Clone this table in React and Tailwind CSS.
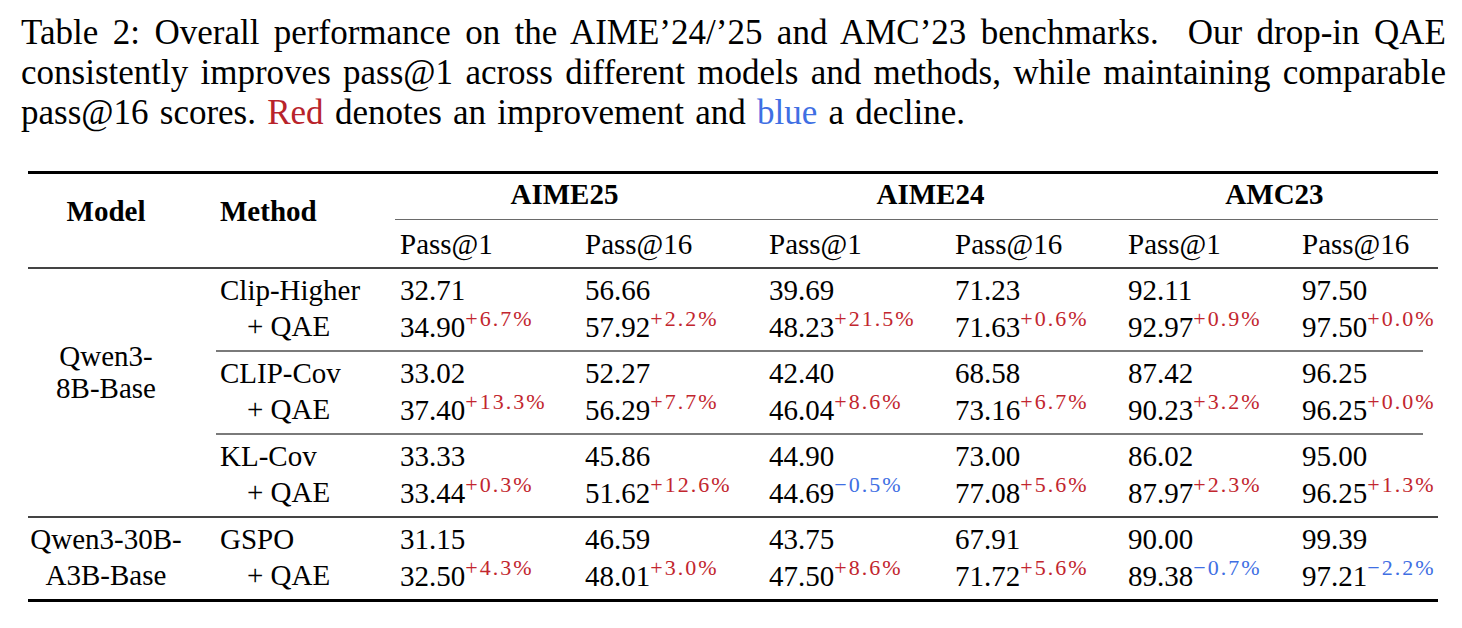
import React from "react";

const serif = { fontFamily: '"Liberation Serif", "Times New Roman", serif' };

const dataCols = ["w-[185px]", "w-[184px]", "w-[186px]", "w-[173px]", "w-[174px]", "w-[141px]"];

const sections = [
  {
    model: ["Qwen3-", "8B-Base"],
    centered: true,
    groups: [
      {
        method: "Clip-Higher",
        base: ["32.71", "56.66", "39.69", "71.23", "92.11", "97.50"],
        qae: [["34.90", "+6.7%"], ["57.92", "+2.2%"], ["48.23", "+21.5%"], ["71.63", "+0.6%"], ["92.97", "+0.9%"], ["97.50", "+0.0%"]],
      },
      {
        method: "CLIP-Cov",
        base: ["33.02", "52.27", "42.40", "68.58", "87.42", "96.25"],
        qae: [["37.40", "+13.3%"], ["56.29", "+7.7%"], ["46.04", "+8.6%"], ["73.16", "+6.7%"], ["90.23", "+3.2%"], ["96.25", "+0.0%"]],
      },
      {
        method: "KL-Cov",
        base: ["33.33", "45.86", "44.90", "73.00", "86.02", "95.00"],
        qae: [["33.44", "+0.3%"], ["51.62", "+12.6%"], ["44.69", "\u22120.5%"], ["77.08", "+5.6%"], ["87.97", "+2.3%"], ["96.25", "+1.3%"]],
      },
    ],
  },
  {
    model: ["Qwen3-30B-", "A3B-Base"],
    centered: false,
    groups: [
      {
        method: "GSPO",
        base: ["31.15", "46.59", "43.75", "67.91", "90.00", "99.39"],
        qae: [["32.50", "+4.3%"], ["48.01", "+3.0%"], ["47.50", "+8.6%"], ["71.72", "+5.6%"], ["89.38", "\u22120.7%"], ["97.21", "\u22122.2%"]],
      },
    ],
  },
];

function Delta({ v }) {
  const neg = v.startsWith("\u2212");
  return (
    <span
      className={`text-[22px] leading-none tracking-[2px] align-[11px] ${neg ? "text-[#3f6fe3]" : "text-[#c2262e]"}`}
    >
      {v}
    </span>
  );
}

function Group({ g }) {
  return (
    <div className="flex h-[81px] pt-[3px]">
      <div className="w-[187px] pl-[12px]">
        <div className="h-[36px] leading-[36px]">{g.method}</div>
        <div className="h-[36px] leading-[36px] pl-[27px]">+ QAE</div>
      </div>
      {g.base.map((b, i) => (
        <div key={i} className={`${dataCols[i]} pl-[5px]`}>
          <div className="h-[36px] leading-[36px]">{b}</div>
          <div className="h-[36px] leading-[36px] whitespace-nowrap">
            {g.qae[i][0]}
            <Delta v={g.qae[i][1]} />
          </div>
        </div>
      ))}
    </div>
  );
}

export default function App() {
  return (
    <div className="w-[1462px] h-[628px] bg-white text-black overflow-hidden" style={serif}>
      <div className="pl-[21px] pr-[16px] pt-[13px] text-[35px] leading-[40px]">
        <div className="text-justify [text-align-last:justify]">
          Table 2: Overall performance on the AIME’24/’25 and AMC’23 benchmarks.&nbsp; Our drop-in QAE
        </div>
        <div className="text-justify [text-align-last:justify]">
          consistently improves pass@1 across different models and methods, while maintaining comparable
        </div>
        <div className="whitespace-nowrap [word-spacing:2.5px]">
          pass@16 scores. <span className="text-[#b8232b]">Red</span> denotes an improvement and{" "}
          <span className="text-[#3f6fe3]">blue</span> a decline.
        </div>
      </div>

      <div className="ml-[28px] mt-[38px] w-[1410px] text-[29px]">
        <div className="h-[3px] bg-black" />
        {/* header */}
        <div className="flex h-[93px]">
          <div className="w-[180px] pr-[24px] pt-[19px] text-center font-bold leading-[36px]">Model</div>
          <div className="w-[187px] pl-[12px] pt-[19px] font-bold leading-[36px]">Method</div>
          <div className="flex-1 flex flex-col">
            <div className="flex h-[45px] font-bold">
              <div className="w-[369px] pr-[30px] pt-[2px] text-center leading-[36px]">AIME25</div>
              <div className="w-[359px] pr-[26px] pt-[2px] text-center leading-[36px]">AIME24</div>
              <div className="w-[315px] pr-[12px] pt-[2px] text-center leading-[36px]">AMC23</div>
            </div>
            <div className="h-[1px] bg-[#6a6a6a]" />
            <div className="flex h-[47px] pt-[6px]">
              {["Pass@1", "Pass@16", "Pass@1", "Pass@16", "Pass@1", "Pass@16"].map((p, i) => (
                <div key={i} className={`${dataCols[i]} pl-[5px] leading-[36px]`}>
                  {p}
                </div>
              ))}
            </div>
          </div>
        </div>
        <div className="h-[2px] bg-[#444]" />

        {sections.map((s, si) => (
          <React.Fragment key={si}>
            {si > 0 && <div className="h-[2px] bg-[#444]" />}
            <div className="flex">
              <div
                className={`w-[180px] pr-[24px] flex flex-col items-center ${s.centered ? "justify-center pb-[42px] leading-[32px]" : "pt-[3px] leading-[36px]"}`}
              >
                <div className="whitespace-nowrap">{s.model[0]}</div>
                <div className="whitespace-nowrap">{s.model[1]}</div>
              </div>
              <div className="flex-1">
                {s.groups.map((g, gi) => (
                  <React.Fragment key={gi}>
                    {gi > 0 && <div className="h-[2px] ml-[8px] mr-[15px] bg-[#7a7a7a]" />}
                    <Group g={g} />
                  </React.Fragment>
                ))}
              </div>
            </div>
          </React.Fragment>
        ))}
        <div className="h-[3px] bg-black" />
      </div>
    </div>
  );
}
